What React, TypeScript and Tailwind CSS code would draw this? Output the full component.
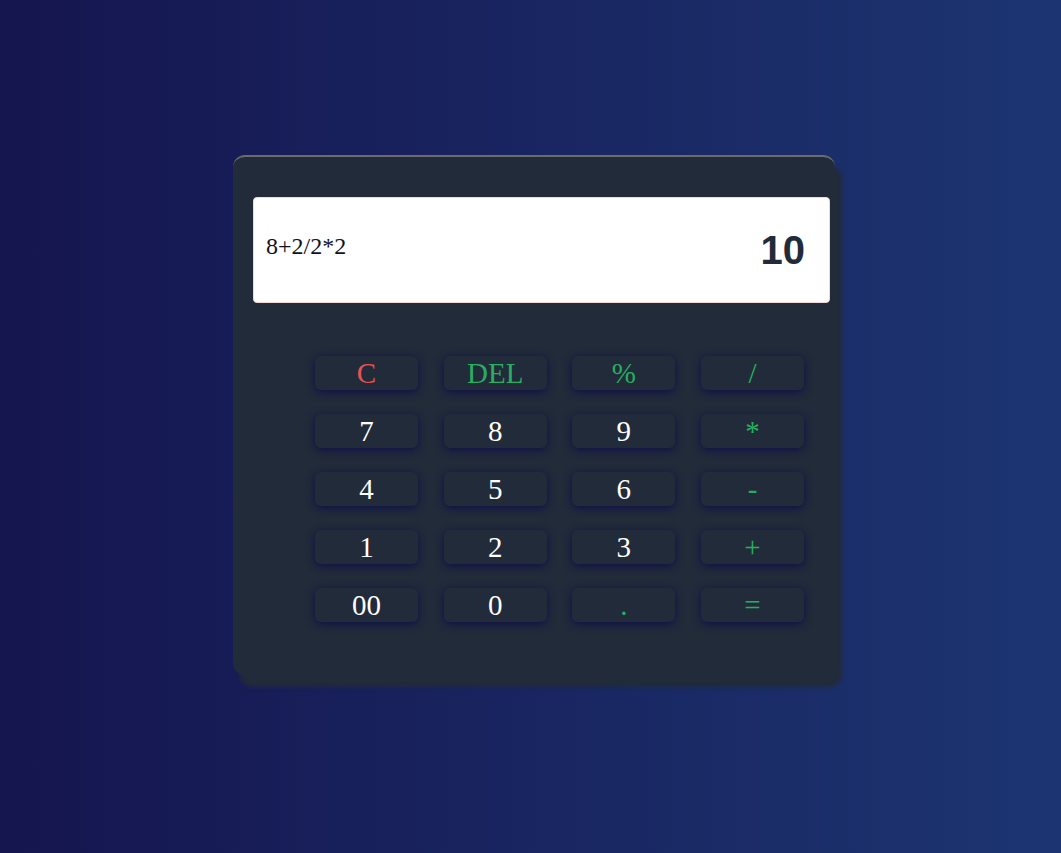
const keys: { label: string; tone: 'red' | 'green' | 'white' }[] = [
  { label: 'C', tone: 'red' },
  { label: 'DEL', tone: 'green' },
  { label: '%', tone: 'green' },
  { label: '/', tone: 'green' },
  { label: '7', tone: 'white' },
  { label: '8', tone: 'white' },
  { label: '9', tone: 'white' },
  { label: '*', tone: 'green' },
  { label: '4', tone: 'white' },
  { label: '5', tone: 'white' },
  { label: '6', tone: 'white' },
  { label: '-', tone: 'green' },
  { label: '1', tone: 'white' },
  { label: '2', tone: 'white' },
  { label: '3', tone: 'white' },
  { label: '+', tone: 'green' },
  { label: '00', tone: 'white' },
  { label: '0', tone: 'white' },
  { label: '.', tone: 'green' },
  { label: '=', tone: 'green' },
];

const toneClass = {
  red: 'text-[#ef4f4f]',
  green: 'text-[#27ae60]',
  white: 'text-white',
};

export default function App() {
  return (
    <div className="flex min-h-screen w-full justify-center bg-gradient-to-r from-[#15154f] to-[#1c3572] pl-[7px] pt-[155px]">
      <div className="h-[520px] w-[602px] rounded-[12px] border-t-2 border-[#6b6b6b] bg-[#222b3a] pt-[40px] shadow-[7px_12px_4px_#222b3a]">
        <div className="ml-[20px] flex h-[106px] w-[577px] items-center justify-between rounded-[4px] border border-[#f2dada] bg-white pl-[12px] pr-[24px]">
          <span className="-mt-[8px] font-['Liberation_Serif',serif] text-[24px] text-[#111122]">8+2/2*2</span>
          <span className="font-['Liberation_Sans',sans-serif] text-[40px] font-bold text-[#222b3a]">10</span>
        </div>

        <div className="mt-[53px] grid grid-cols-[repeat(4,103px)] gap-x-[25.67px] gap-y-[24px] pl-[82px]">
          {keys.map((key) => (
            <button
              key={key.label}
              type="button"
              className={`h-[34px] rounded-[6px] bg-[#222b3a] text-center font-['Liberation_Serif',serif] text-[29px] leading-[34px] shadow-[0_2px_8px_#0e0f48] ${toneClass[key.tone]}`}
            >
              {key.label}
            </button>
          ))}
        </div>
      </div>
    </div>
  );
}
